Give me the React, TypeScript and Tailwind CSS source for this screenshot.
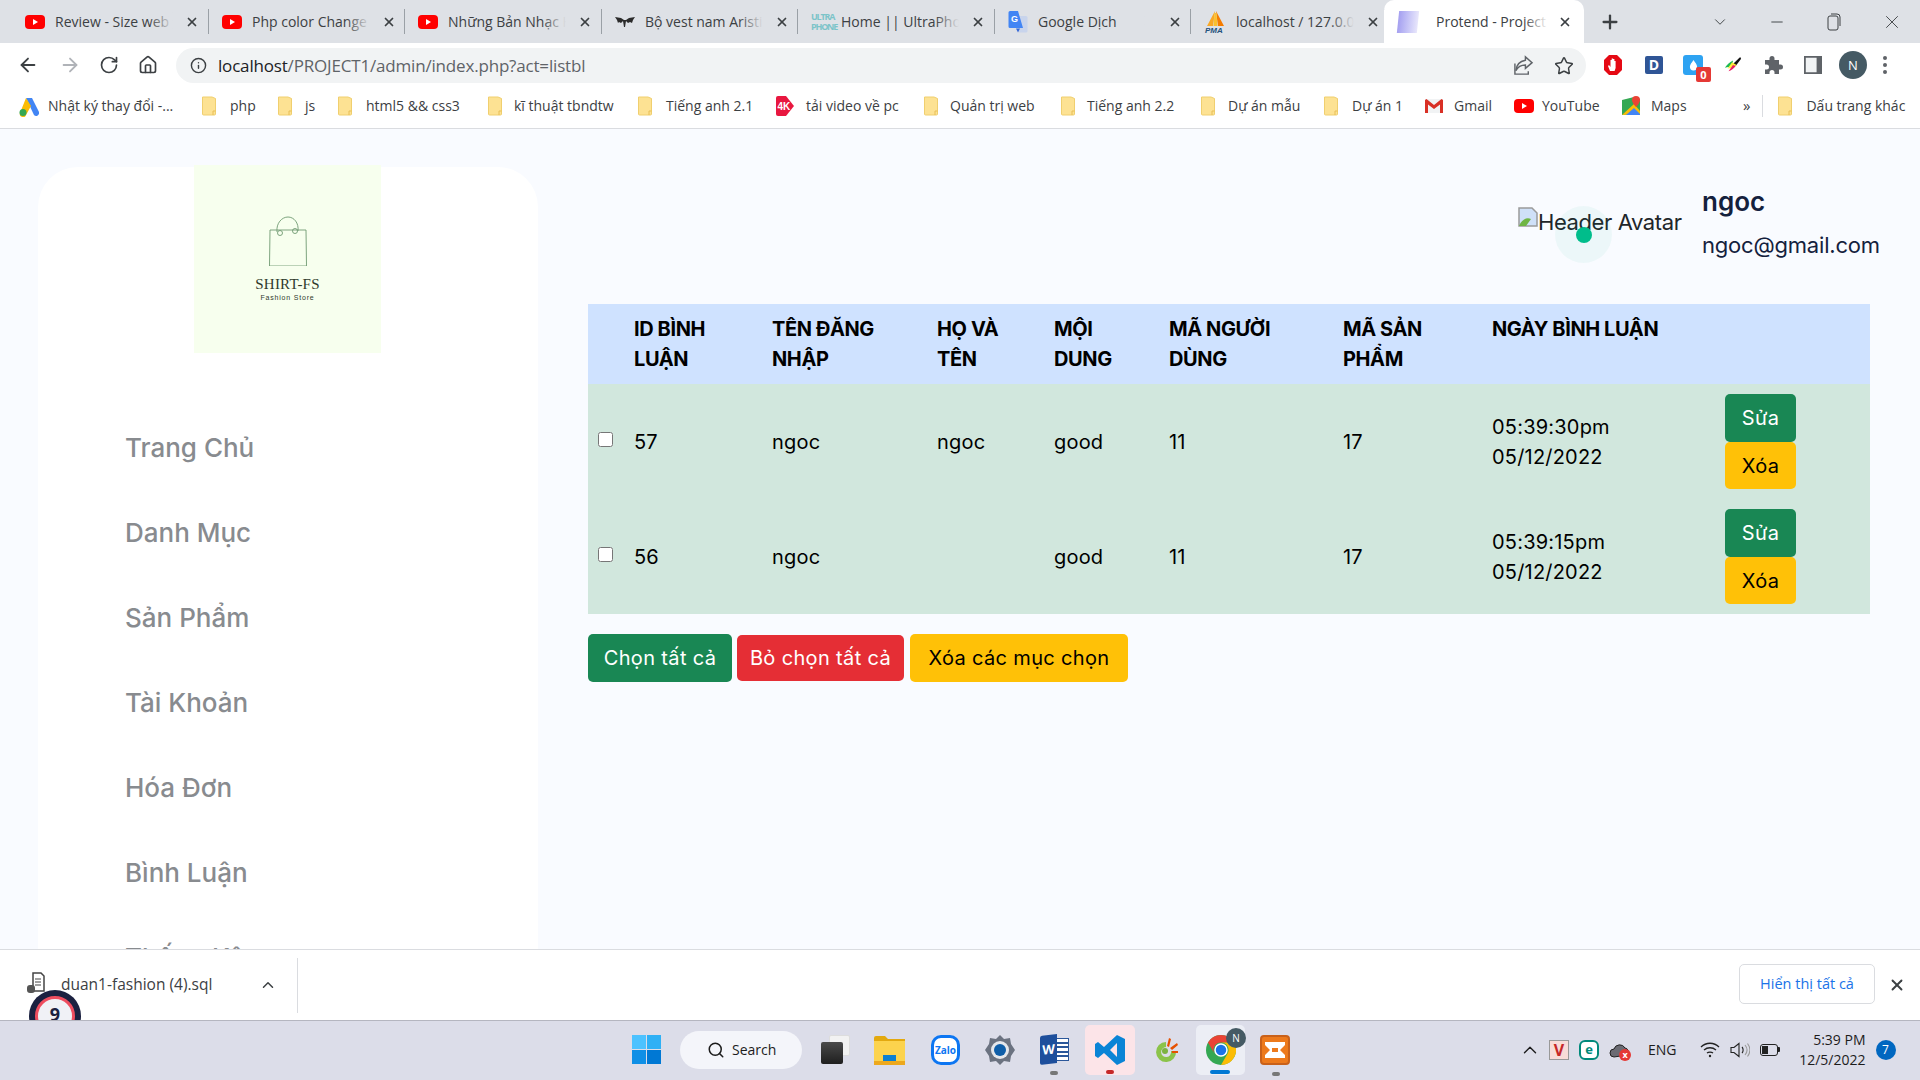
import { ArrowLeft, ArrowRight, RotateCw, Home, Info, Star, ChevronDown, ChevronUp, Minus, X, Plus, Search } from 'lucide-react';
import type { ReactNode } from 'react';

const YoutubeIcon = () => (
  <svg viewBox="0 0 20 20" className="w-5 h-5 shrink-0">
    <rect x="0" y="3" width="20" height="14" rx="4" fill="#f00" />
    <path d="M8 7l5 3-5 3z" fill="#fff" />
  </svg>
);

const FolderIcon = () => (
  <svg viewBox="0 0 16 20" className="w-4 h-5 shrink-0">
    <path d="M1.5 1h9.5l3.5 1.5V18a1 1 0 0 1-1 1H2.5a1 1 0 0 1-1-1z" fill="#fde293" stroke="#f0cf6f" />
    <path d="M12 19v-4h2.5" fill="none" stroke="#e8bf57" />
  </svg>
);

const tabs: { title: string; icon: ReactNode; width: string }[] = [
  { title: 'Review - Size web cho', icon: <YoutubeIcon />, width: 'w-[197px]' },
  { title: 'Php color Change text', icon: <YoutubeIcon />, width: 'w-[196px]' },
  { title: 'Những Bản Nhạc Hay', icon: <YoutubeIcon />, width: 'w-[197px]' },
  {
    title: 'Bộ vest nam Aristino',
    width: 'w-[196px]',
    icon: (
      <svg viewBox="0 0 20 16" className="w-5 h-4 shrink-0">
        <path d="M0 3l6 1 3 2h2l3-2 6-1-2 3-1 3-2-1-2 1-2-2-1 6H9L8 7 6 9 4 8 3 9 2 6z" fill="#2b2b2b" />
      </svg>
    ),
  },
  {
    title: 'Home || UltraPhone',
    width: 'w-[197px]',
    icon: (
      <div className="w-5 shrink-0 text-[9px] leading-[10px] font-bold text-[#7cc4c9] tracking-[-1.2px] text-center">
        ULTRA
        <br />
        PHONE
      </div>
    ),
  },
  {
    title: 'Google Dịch',
    width: 'w-[196px]',
    icon: (
      <svg viewBox="0 0 20 24" className="w-5 h-6 shrink-0">
        <path d="M9 6h9a1.500 1.500 0 0 1 1.500 1.500V21a1.500 1.500 0 0 1-1.500 1.500h-7z" fill="#c8d4ec" />
        <path d="M2 1h8l5 17H2a1.500 1.500 0 0 1-1.500-1.500v-14A1.500 1.500 0 0 1 2 1z" fill="#4285f4" />
        <text x="3" y="12" fontSize="9" fontWeight="700" fill="#fff" fontFamily="Liberation Sans">G</text>
        <path d="M10 22.500l2-4h-4z" fill="#3367d6" />
      </svg>
    ),
  },
  {
    title: 'localhost / 127.0.0.1',
    width: 'w-[194px]',
    icon: (
      <svg viewBox="0 0 22 24" className="w-[22px] h-6 shrink-0">
        <path d="M11 1l-2 15H3z" fill="#f9a825" />
        <path d="M12 1l2 15h6z" fill="#f57c00" />
        <path d="M10.500 3h2l1 13h-4z" fill="#fbc02d" />
        <text x="1" y="23" fontSize="8" fontWeight="700" fontStyle="italic" fill="#23527c" fontFamily="Liberation Sans">PMA</text>
      </svg>
    ),
  },
];

const bookmarks: { label: string; icon: ReactNode; width: string; gap: string }[] = [
  {
    label: 'Nhật ký thay đổi -...',
    width: 'w-[183px]',
    gap: 'gap-[8px]',
    icon: (
      <svg viewBox="0 0 22 22" className="w-[22px] h-[22px] shrink-0">
        <path d="M8 3l6 0 7 14a3 3 0 0 1-5 3z" fill="#4285f4" />
        <path d="M8 3l5 8-5 9a3 3 0 0 1-6-2z" fill="#fbbc04" />
        <circle cx="5" cy="17.500" r="3.500" fill="#34a853" />
      </svg>
    ),
  },
  { label: 'php', width: 'w-[76px]', gap: 'gap-[13px]', icon: <FolderIcon /> },
  { label: 'js', width: 'w-[60px]', gap: 'gap-[12px]', icon: <FolderIcon /> },
  { label: 'html5 && css3', width: 'w-[150px]', gap: 'gap-[13px]', icon: <FolderIcon /> },
  { label: 'kĩ thuật tbndtw', width: 'w-[150px]', gap: 'gap-[11px]', icon: <FolderIcon /> },
  { label: 'Tiếng anh 2.1', width: 'w-[138px]', gap: 'gap-[13px]', icon: <FolderIcon /> },
  {
    label: 'tải video về pc',
    width: 'w-[148px]',
    gap: 'gap-[11px]',
    icon: (
      <svg viewBox="0 0 20 22" className="w-5 h-[22px] shrink-0">
        <path d="M3 1h8l8 10-8 10H3a2 2 0 0 1-2-2V3a2 2 0 0 1 2-2z" fill="#e8173f" />
        <text x="2.500" y="15" fontSize="10" fontWeight="700" fill="#fff" fontFamily="Liberation Sans">4K</text>
      </svg>
    ),
  },
  { label: 'Quản trị web', width: 'w-[137px]', gap: 'gap-[11px]', icon: <FolderIcon /> },
  { label: 'Tiếng anh 2.2', width: 'w-[140px]', gap: 'gap-[11px]', icon: <FolderIcon /> },
  { label: 'Dự án mẫu', width: 'w-[123px]', gap: 'gap-[12px]', icon: <FolderIcon /> },
  { label: 'Dự án 1', width: 'w-[101px]', gap: 'gap-[13px]', icon: <FolderIcon /> },
  {
    label: 'Gmail',
    width: 'w-[90px]',
    gap: 'gap-[10px]',
    icon: (
      <svg viewBox="0 0 20 16" className="w-5 h-4 shrink-0">
        <path d="M1 1h18v14H1z" fill="#f1f3f4" />
        <path d="M1 2v13h3V6.500L10 11l6-4.500V15h3V2l-1.500-1L10 7 2.500 1z" fill="#d93025" />
      </svg>
    ),
  },
  { label: 'YouTube', width: 'w-[107px]', gap: 'gap-[8px]', icon: <YoutubeIcon /> },
  {
    label: 'Maps',
    width: 'w-[123px]',
    gap: 'gap-[10px]',
    icon: (
      <svg viewBox="0 0 20 20" className="w-5 h-5 shrink-0">
        <path d="M1 4l12-3 6 2v15L1 19z" fill="#34a853" />
        <path d="M1 19L13 8l6 7v3z" fill="#fbbc04" />
        <path d="M5 19l8-7 6 6v1z" fill="#4285f4" />
        <path d="M15 0a4 4 0 0 1 4 4c0 3-4 7-4 7s-4-4-4-7a4 4 0 0 1 4-4z" fill="#ea4335" />
      </svg>
    ),
  },
];

const menuItems = ['Trang Chủ', 'Danh Mục', 'Sản Phẩm', 'Tài Khoản', 'Hóa Đơn', 'Bình Luận', 'Thống Kê'];

const comments = [
  { id: '57', user: 'ngoc', name: 'ngoc', content: 'good', userId: '11', productId: '17', time: '05:39:30pm', date: '05/12/2022' },
  { id: '56', user: 'ngoc', name: '', content: 'good', userId: '11', productId: '17', time: '05:39:15pm', date: '05/12/2022' },
];

const BrowserChrome = () => (
  <div className="font-['Open_Sans',sans-serif] text-[#3c4043] shrink-0">
    {/* Tab strip */}
    <div className="h-[43px] bg-[#dee1e6] flex items-start pl-[12px]">
      {tabs.map((tab) => (
        <div key={tab.title} className={`${tab.width} h-[25px] mt-[9px] flex items-center pl-[13px] pr-[6px] gap-[10px] border-r border-[#9aa0a6]`}>
          {tab.icon}
          <div className="relative w-[118px] overflow-hidden whitespace-nowrap text-[14px] shrink-0">
            {tab.title}
            <div className="absolute inset-y-0 right-0 w-6 bg-gradient-to-r from-transparent to-[#dee1e6]" />
          </div>
          <X className="w-[14px] h-[14px] text-[#3c4043] shrink-0 ml-[2px]" strokeWidth={3} />
        </div>
      ))}
      <div className="w-[200px] h-[43px] ml-[-1px] bg-white rounded-t-[10px] flex items-center pl-[14px] gap-[18px]">
        <div className="w-[20px] h-[22px] shrink-0 bg-gradient-to-r from-[#a5a0f0] to-[#e8e6fb] -skew-x-6" />
        <div className="relative w-[112px] overflow-hidden whitespace-nowrap text-[14px] shrink-0">
          Protend - Project List
          <div className="absolute inset-y-0 right-0 w-6 bg-gradient-to-r from-transparent to-white" />
        </div>
        <X className="w-[14px] h-[14px] -ml-[8px] shrink-0" strokeWidth={3} />
      </div>
      <div className="h-[43px] flex items-center">
        <Plus className="w-[22px] h-[22px] ml-[15px]" strokeWidth={2.5} />
        <ChevronDown className="w-[18px] h-[18px] ml-[90px]" strokeWidth={1.25} />
        <Minus className="w-[18px] h-[18px] ml-[39px]" strokeWidth={1.25} />
        <svg viewBox="0 0 16 20" className="w-[16px] h-5 ml-[40px] text-[#3c4043]" fill="none" stroke="currentColor">
          <rect x="2" y="4" width="10" height="14" rx="2" />
          <path d="M5 2h6a3 3 0 0 1 3 3v9" />
        </svg>
        <X className="w-[22px] h-[22px] ml-[39px]" strokeWidth={1} />
      </div>
    </div>

    {/* Address bar */}
    <div className="h-[42px] bg-white flex items-center pt-[2px]">
      <ArrowLeft className="w-[22px] h-[22px] ml-[17px]" strokeWidth={2} />
      <ArrowRight className="w-[22px] h-[22px] ml-[20px] text-[#b0b3b8]" strokeWidth={2} />
      <RotateCw className="w-[20px] h-[20px] ml-[18px]" strokeWidth={2} />
      <Home className="w-[20px] h-[20px] ml-[19px]" strokeWidth={2} />
      <div className="w-[1410px] h-[35px] mt-[1px] ml-[18px] rounded-full bg-[#f1f3f4] flex items-center pl-[14px] pr-[12px]">
        <Info className="w-[17px] h-[17px]" strokeWidth={2} />
        <div className="ml-[11px] text-[17px] text-[#5f6368] tracking-[-0.18px]">
          <span className="text-[#202124]">localhost</span>/PROJECT1/admin/index.php?act=listbl
        </div>
        <svg viewBox="0 0 22 22" className="w-[21px] h-[21px] ml-auto" fill="none" stroke="#5f6368" strokeWidth="1.5">
          <path d="M13 2l7 6-7 6v-3.500c-5 0-8 2-10 6 .5-6 4-10 10-11z" />
          <path d="M2 9v11h14v-3" />
        </svg>
        <Star className="w-[20px] h-[20px] ml-[20px]" strokeWidth={1.75} />
      </div>
      <svg viewBox="0 0 20 22" className="w-5 h-[22px] ml-[17px]">
        <path d="M6 1h8l5 5v10l-5 5H6l-5-5V6z" fill="#e50914" />
        <path d="M7 17l-2-5 1-1 1.500 2V6h1.200v5-6.500h1.400V11 5h1.300v6-4h1.200v7l-1 3z" fill="#fff" />
      </svg>
      <div className="w-[18px] h-[18px] ml-[22px] rounded-[2px] bg-[#2f5596] text-white text-[14px] font-bold leading-[18px] text-center">D</div>
      <div className="relative ml-[20px] w-[20px] h-[20px] rounded-[3px] bg-[#2ea3f2] flex items-center justify-center">
        <svg viewBox="0 0 10 12" className="w-[9px] h-[11px]">
          <path d="M5 0c2 3 4 5 4 7.500a4 4 0 0 1-8 0C1 5 3 3 5 0z" fill="#fff" />
        </svg>
        <div className="absolute -right-[8px] -bottom-[7px] w-[15px] h-[15px] rounded-[2px] bg-[#e53935] text-white text-[11px] font-bold leading-[15px] text-center">0</div>
      </div>
      <svg viewBox="0 0 20 20" className="w-[18px] h-[18px] ml-[21px]">
        <path d="M18 1l1 2-6 8-3-2z" fill="#111" />
        <path d="M10 5c-4 2-7 5-9 8 3-1 6-1 8-2z" fill="#1db954" />
        <path d="M9 7l-5 7 6-1 4-3z" fill="#ffeb3b" />
        <path d="M10 10l-5 7c3-1 6-3 8-6z" fill="#e91e63" />
      </svg>
      <svg viewBox="0 0 20 20" className="w-5 h-5 ml-[22px]">
        <path d="M8 1a2.500 2.500 0 0 1 2.500 2.500V5H15v4.500h1.500a2.500 2.500 0 0 1 0 5H15V19H10.500v-1.500a2.500 2.500 0 0 0-5 0V19H1v-4.500h1.500a2.500 2.500 0 0 0 0-5H1V5h4.500V3.500A2.500 2.500 0 0 1 8 1z" fill="#5f6368" />
      </svg>
      <svg viewBox="0 0 20 20" className="w-[18px] h-[18px] ml-[20px]">
        <path d="M1 1h18v18H1z" fill="#f1f3f4" stroke="#5f6368" strokeWidth="2" />
        <path d="M14 1h5v18h-5z" fill="#5f6368" />
      </svg>
      <div className="w-7 h-7 ml-[17px] rounded-full bg-[#455a64] text-white text-[13px] leading-7 text-center">N</div>
      <div className="ml-[16px] flex flex-col gap-[3px]">
        <div className="w-[4px] h-[4px] rounded-full bg-[#5f6368]" />
        <div className="w-[4px] h-[4px] rounded-full bg-[#5f6368]" />
        <div className="w-[4px] h-[4px] rounded-full bg-[#5f6368]" />
      </div>
    </div>

    {/* Bookmarks */}
    <div className="h-[44px] bg-white border-b border-[#dadce0] flex items-center pl-[18px] pb-[2px] text-[14px]">
      {bookmarks.map((b) => (
        <div key={b.label} className={`${b.width} ${b.gap} flex items-center shrink-0 whitespace-nowrap`}>
          {b.icon}
          <span>{b.label}</span>
        </div>
      ))}
      <span className="text-[15px] -ml-[1px]">»</span>
      <div className="w-px h-[22px] bg-[#dadce0] ml-[12px]" />
      <div className="ml-[14px] flex items-center gap-[13px] whitespace-nowrap">
        <FolderIcon />
        <span>Dấu trang khác</span>
      </div>
    </div>
  </div>
);

const Sidebar = () => (
  <aside className="w-[500px] ml-[38px] mt-[38px] shrink-0 bg-white rounded-t-[40px] font-['Inter',sans-serif]">
    <div className="w-[187px] h-[188px] ml-[156px] -mt-[2px] bg-[#f7ffee] flex flex-col items-center pt-[51px] text-[#2f3a2c]">
      <svg viewBox="0 0 38 50" className="w-[38px] h-[50px]" fill="none" stroke="#6f9a72" strokeWidth="0.900">
        <path d="M1 14h36l.5 36H.5z" />
        <path d="M8 16c-1-9 5-15 11-15s11 6 10 14" />
        <circle cx="11" cy="17" r="2.500" />
        <circle cx="26" cy="15" r="2.500" />
      </svg>
      <div className="mt-[9px] font-['Liberation_Serif',serif] text-[15px] leading-[18px] tracking-[0.2px]">SHIRT-FS</div>
      <div className="font-['Liberation_Sans',sans-serif] text-[7px] leading-[9px] tracking-[0.8px]">Fashion Store</div>
    </div>
    <nav className="mt-[52px] pl-[87px] flex flex-col text-[26px] font-medium text-[#888b8f]">
      {menuItems.map((item) => (
        <div key={item} className="h-[85px] flex items-center">{item}</div>
      ))}
    </nav>
  </aside>
);

const Btn = ({ color, children, size = '' }: { color: string; children: ReactNode; size?: string }) => (
  <button className={`${color} ${size} rounded-[5px] flex items-center justify-center text-[20px] tracking-[0.35px]`}>{children}</button>
);

const Content = () => (
  <main className="w-[1282px] ml-[50px] shrink-0 pt-[53px] font-['Inter',sans-serif] text-[#000]">
    <div className="h-[122px] -mr-[9px] flex justify-end">
      <div className="relative w-[184px] h-[60px] flex items-start pt-[25px]">
        <svg viewBox="0 0 20 20" className="w-5 h-5 shrink-0">
          <path d="M1 1h13l5 5v13H1z" fill="#cfe0f8" stroke="#9b9b9b" strokeWidth="1.500" />
          <path d="M1 19c3-7 8-9 12-7l-5 7z" fill="#6fb544" />
        </svg>
        <span className="text-[22px] leading-[30px] text-[#212529] whitespace-nowrap tracking-[-0.4px]">Header Avatar</span>
        <div className="absolute left-[37px] top-[24px] w-[57px] h-[57px] rounded-full bg-[#00b98a]/5 flex items-center justify-center">
          <div className="w-4 h-4 rounded-full bg-[#00bd8b]" />
        </div>
      </div>
      <div className="w-[177px] text-[#14213d]">
        <div className="text-[26px] leading-[39px] font-semibold">ngoc</div>
        <div className="mt-[8px] text-[22px] leading-[33px] tracking-[-0.2px]">ngoc@gmail.com</div>
      </div>
    </div>

    <table className="w-[1282px] table-fixed border-collapse text-[20px] leading-[30px]">
      <colgroup>
        <col className="w-[34px]" />
        <col className="w-[138px]" />
        <col className="w-[165px]" />
        <col className="w-[117px]" />
        <col className="w-[115px]" />
        <col className="w-[174px]" />
        <col className="w-[149px]" />
        <col className="w-[233px]" />
        <col className="w-[157px]" />
      </colgroup>
      <thead>
        <tr className="bg-[#cfe2ff] h-[80px] align-top text-left">
          <th />
          {['ID BÌNH LUẬN', 'TÊN ĐĂNG NHẬP', 'HỌ VÀ TÊN', 'MỘI DUNG', 'MÃ NGƯỜI DÙNG', 'MÃ SẢN PHẨM', 'NGÀY BÌNH LUẬN'].map((h) => (
            <th key={h} className="px-3 py-[10px] font-bold tracking-[-0.4px]">{h}</th>
          ))}
          <th />
        </tr>
      </thead>
      <tbody className="tracking-[0.2px]">
        {comments.map((c) => (
          <tr key={c.id} className="bg-[#d1e7dd] h-[115px]">
            <td className="pl-[10px] pb-[4px]">
              <input type="checkbox" className="w-[15px] h-[15px] block" />
            </td>
            <td className="px-3">{c.id}</td>
            <td className="px-3">{c.user}</td>
            <td className="px-3">{c.name}</td>
            <td className="px-3">{c.content}</td>
            <td className="px-3">{c.userId}</td>
            <td className="px-3">{c.productId}</td>
            <td className="px-3">
              {c.time}
              <br />
              {c.date}
            </td>
            <td className="px-3 py-[10px]">
              <Btn color="bg-[#198754] text-white" size="w-[71px] h-[48px]">Sửa</Btn>
              <Btn color="bg-[#ffc107] text-black" size="w-[71px] h-[47px]">Xóa</Btn>
            </td>
          </tr>
        ))}
      </tbody>
    </table>

    <div className="mt-[20px] flex items-center gap-[5px]">
      <Btn color="bg-[#198754] text-white" size="w-[144px] h-[48px]">Chọn tất cả</Btn>
      <Btn color="bg-[#e52e35] text-white" size="w-[167px] h-[46px]">Bỏ chọn tất cả</Btn>
      <Btn color="bg-[#ffc107] text-black" size="w-[218px] h-[48px] ml-[1px]">Xóa các mục chọn</Btn>
    </div>
  </main>
);

const DownloadBar = () => (
  <div className="h-[71px] shrink-0 bg-white border-t border-[#dadce0] flex items-center font-['Open_Sans',sans-serif] text-[#3c4043] overflow-hidden relative">
    <svg viewBox="0 0 20 22" className="w-5 h-[22px] ml-[26px] -mt-[4px]">
      <path d="M7 1h8l3 3v15H7z" fill="#fff" stroke="#444" strokeWidth="1.500" />
      <path d="M9 7h6M9 10h6M9 13h6" stroke="#444" />
      <rect x="1" y="13" width="8" height="8" rx="3" fill="#555" />
    </svg>
    <span className="ml-[15px] text-[15.5px]">duan1-fashion (4).sql</span>
    <ChevronUp className="w-[18px] h-[18px] ml-[47px]" />
    <div className="w-px h-[55px] ml-[20px] bg-[#dadce0]" />
    <button className="ml-auto w-[136px] h-[40px] mb-[2px] rounded-[5px] border border-[#dadce0] text-[14.5px] text-[#1a73e8]">Hiển thị tất cả</button>
    <X className="w-[18px] h-[18px] ml-[13px] mr-[14px]" strokeWidth={2.5} />
    {/* Speed badge overlapping the bar */}
    <div className="absolute left-[29px] top-[40px] w-[52px] h-[52px] rounded-full bg-[#1b2140] flex items-center justify-center">
      <div className="w-[40px] h-[40px] rounded-full border-[3px] border-[#ee4d5f] bg-[#f0f1f6] flex justify-center text-[18px] font-bold leading-[30px] text-[#1b2140]">9</div>
    </div>
  </div>
);

const Taskbar = () => (
  <div className="h-[60px] shrink-0 bg-[#dcdde9] border-t border-[#b5b6c0] flex items-center pb-[2px] relative font-['Open_Sans',sans-serif] text-[#1c1c1c]">
    {/* Start */}
    <div className="ml-[632px] grid grid-cols-2 gap-[1px] w-[29px] h-[29px]">
      <div className="bg-[#4cc2ff]" />
      <div className="bg-[#2fb0f5]" />
      <div className="bg-[#0f8fe6]" />
      <div className="bg-[#0078d4]" />
    </div>
    <div className="ml-[19px] w-[122px] h-[38px] rounded-full bg-[#f4f5fa] flex items-center pl-[27px] gap-[7px] text-[14px]">
      <Search className="w-[18px] h-[18px]" strokeWidth={2} />
      Search
    </div>
    <div className="ml-[19px] w-[29px] h-[29px] relative">
      <div className="absolute right-0 top-0 w-[21px] h-[21px] rounded-[2px] bg-[#f2f2f2] border border-[#ddd]" />
      <div className="absolute left-0 bottom-0 w-[22px] h-[22px] rounded-[2px] bg-gradient-to-b from-[#4a4a4a] to-[#1f1f1f]" />
    </div>
    <svg viewBox="0 0 31 30" className="w-[31px] h-[30px] ml-[24px]">
      <path d="M0 3a2 2 0 0 1 2-2h9l3 3h17v24a2 2 0 0 1-2 2H2a2 2 0 0 1-2-2z" fill="#e3a90f" />
      <path d="M0 6h31v24H0z" fill="#fcd34d" />
      <path d="M9 20h13v6H9z" fill="#0b7fd1" />
      <path d="M0 26h31v4H0z" fill="#eda81d" />
    </svg>
    <div className="ml-[26px] w-[29px] h-[30px] rounded-[10px] bg-white border-[3px] border-[#0d76f2] text-[#0d76f2] text-[10px] font-bold leading-[24px] text-center">Zalo</div>
    <svg viewBox="0 0 32 32" className="w-[32px] h-[32px] ml-[24px]">
      <path d="M16 1l4 4 6-1 1 6 4 6-4 6-1 6-6-1-4 4-4-4-6 1-1-6-4-6 4-6 1-6 6 1z" fill="#6b7280" />
      <circle cx="16" cy="16" r="9" fill="#e5e7eb" />
      <circle cx="16" cy="16" r="6" fill="#0f5ea8" />
    </svg>
    <div className="relative ml-[24px] w-[29px] h-[29px]">
      <div className="absolute left-[12px] top-[3px] w-[17px] h-[23px] bg-white border border-[#2b579a] flex flex-col justify-evenly pl-[4px]">
        <div className="h-[2px] bg-[#2b579a]" />
        <div className="h-[2px] bg-[#2b579a]" />
        <div className="h-[2px] bg-[#2b579a]" />
        <div className="h-[2px] bg-[#2b579a]" />
      </div>
      <div className="absolute left-0 top-0 w-[17px] h-[29px] bg-[#1e4f9c] rounded-l-[2px] skew-y-[-6deg] text-white text-[13px] font-bold leading-[29px] text-center">W</div>
      <div className="absolute left-[10px] -bottom-[11px] w-[8px] h-[4px] rounded-full bg-[#777]" />
    </div>
    <div className="relative ml-[16px] w-[50px] h-[50px] rounded-[5px] bg-[#fce4e8] flex items-center justify-center">
      <svg viewBox="0 0 32 32" className="w-[32px] h-[32px]">
        <path d="M23 1l8 4v22l-8 4-13-12-6 5-3-2V10l3-2 6 5z" fill="#0a84d6" />
        <path d="M23 9l-7 7 7 7z" fill="#fce4e8" />
      </svg>
      <div className="absolute left-[21px] bottom-[1px] w-[8px] h-[4px] rounded-full bg-[#c62828]" />
    </div>
    <svg viewBox="0 0 26 26" className="w-[26px] h-[26px] ml-[18px]">
      <path d="M13 5a10 10 0 1 0 10 9h-5a5 5 0 1 1-5-4z" fill="#8bc34a" />
      <circle cx="12" cy="14" r="3" fill="#7cb342" />
      <path d="M14 9l2-8 2 1-2 8zM17 11l7-5 1 2-6 5zM19 14h6v2h-6z" fill="#e65100" />
    </svg>
    <div className="relative ml-[17px] w-[49px] h-[50px] rounded-[5px] bg-[#eceef5] flex items-center justify-center">
      <svg viewBox="0 0 30 30" className="w-[30px] h-[30px]">
        <circle cx="15" cy="15" r="15" fill="#34a853" />
        <path d="M15 0a15 15 0 0 1 13 7.500H15a7.500 7.500 0 0 0-6.500 11.250L2 7.500A15 15 0 0 1 15 0z" fill="#ea4335" />
        <path d="M28 7.500A15 15 0 0 1 15 30l6.500-11.250A7.500 7.500 0 0 0 15 7.500z" fill="#fbbc04" />
        <circle cx="15" cy="15" r="6" fill="#1a73e8" stroke="#fff" strokeWidth="1.500" />
      </svg>
      <div className="absolute right-[-1px] top-[3px] w-[20px] h-[20px] rounded-full bg-[#455a64] text-white text-[10px] leading-5 text-center">N</div>
      <div className="absolute left-[14px] bottom-[1px] w-[20px] h-[4px] rounded-full bg-[#0078d4]" />
    </div>
    <div className="relative ml-[15px] w-[30px] h-[30px]">
      <svg viewBox="0 0 30 30" className="w-[30px] h-[30px]">
        <rect x="1" y="1" width="28" height="28" rx="3" fill="#ed7a1c" stroke="#c9611a" strokeWidth="2" />
        <path d="M5 7h20v3l-5 5 5 5v3H5v-3l5-5-5-5z" fill="#fff" />
        <path d="M12 13h6v4h-6z" fill="#ed7a1c" />
      </svg>
      <div className="absolute left-[12px] -bottom-[11px] w-[8px] h-[4px] rounded-full bg-[#777]" />
    </div>

    {/* Tray */}
    <ChevronUp className="w-[22px] h-[22px] ml-[229px]" strokeWidth={1.5} />
    <div className="ml-[8px] w-[20px] h-[20px] bg-[#f8dcd8] border border-[#999] text-[#c62828] text-[16px] font-bold leading-[18px] text-center">V</div>
    <div className="ml-[10px] w-[20px] h-[20px] rounded-[6px] border-[2px] border-[#00897b] bg-white text-[#00897b] text-[13px] font-bold leading-[15px] text-center">e</div>
    <div className="relative ml-[10px] w-[20px] h-[16px]">
      <svg viewBox="0 0 20 16" className="w-5 h-4">
        <path d="M5 15a4 4 0 0 1 0-8 6 6 0 0 1 11-1 4 4 0 0 1 2 7z" fill="#6b6b73" stroke="#222" />
      </svg>
      <div className="absolute right-[-2px] bottom-[-3px] w-[12px] h-[12px] rounded-full bg-[#e53935] text-white text-[9px] font-bold leading-[11px] text-center">x</div>
    </div>
    <span className="ml-[19px] text-[14px]">ENG</span>
    <svg viewBox="0 0 20 16" className="w-5 h-4 ml-[23px]" fill="none" stroke="#222" strokeWidth="1.300">
      <path d="M1 5c5-5 13-5 18 0M4 8c3.500-3 8.500-3 12 0M7 11c1.500-1.200 4.500-1.200 6 0" />
      <circle cx="10" cy="14" r="1.200" fill="#222" stroke="none" />
    </svg>
    <svg viewBox="0 0 20 16" className="w-5 h-4 ml-[10px]" fill="none" stroke="#222" strokeWidth="1.100">
      <path d="M1 5.500h3L9 1.500v13l-5-4H1z" />
      <path d="M12 5c1.500 1.500 1.500 4.500 0 6" />
      <path d="M15 3c2.500 3 2.500 7 0 10M17.500 1.500c3 4 3 9 0 13" stroke="#999" />
    </svg>
    <div className="ml-[10px] w-[18px] h-[12px] rounded-[3px] border-[1.500px] border-[#222] flex p-[1px]">
      <div className="w-[6px] bg-[#222]" />
    </div>
    <div className="w-[2px] h-[5px] bg-[#222] rounded-r-[1px]" />
    <div className="ml-[6px] w-[80px] text-right text-[14px] leading-[20px]">
      <div>5:39 PM</div>
      <div>12/5/2022</div>
    </div>
    <div className="ml-[10px] w-[20px] h-[20px] rounded-full bg-[#0067c0] text-white text-[12px] leading-5 text-center">7</div>
  </div>
);

const App = () => (
  <div className="w-[1920px] h-screen flex flex-col overflow-hidden bg-[#f9fbff]">
    <BrowserChrome />
    <div className="flex-1 min-h-0 flex overflow-hidden">
      <Sidebar />
      <Content />
    </div>
    <DownloadBar />
    <Taskbar />
  </div>
);

export default App;
